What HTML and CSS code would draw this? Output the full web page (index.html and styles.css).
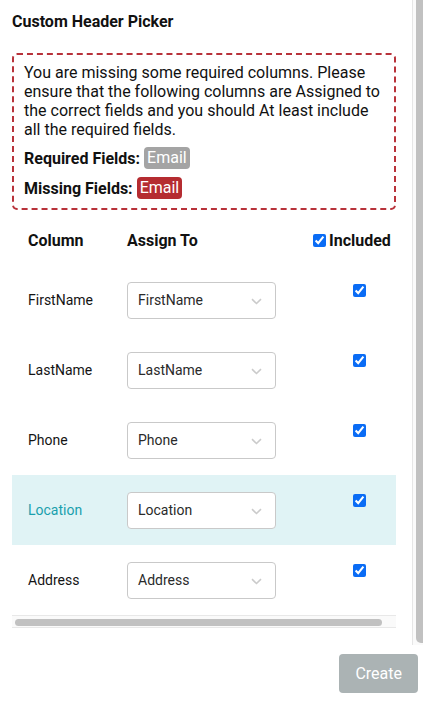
FILE: index.html
```html
<!DOCTYPE html>
<html>
<head>
<meta charset="utf-8">
<link rel="stylesheet" href="styles.css">
</head>
<body>
<div class="panel">
  <div class="body">
    <div class="content">
      <h1 class="title">Custom Header Picker</h1>
      <div class="alert">
        <p class="alert-text">You are missing some required columns. Please ensure that the following columns are Assigned to the correct fields and you should At least include all the required fields.</p>
        <div class="field-line"><strong>Required Fields:</strong><span class="badge badge-gray">Email</span></div>
        <div class="field-line"><strong>Missing Fields:</strong><span class="badge badge-red">Email</span></div>
      </div>
      <div class="table-wrap">
        <div class="table">
          <div class="row head">
            <div class="c1">Column</div>
            <div class="c2">Assign To</div>
            <div class="c3 head-inc"><input type="checkbox" class="chk" checked><span>Included</span></div>
          </div>
          <div class="row">
            <div class="c1">FirstName</div>
            <div class="c2"><div class="select"><span>FirstName</span><svg class="chev" width="11" height="7" viewBox="0 0 11 7"><path d="M1 1.2 L5.5 5.5 L10 1.2" fill="none" stroke="#cbcbcb" stroke-width="1.6"/></svg></div></div>
            <div class="c3 cell-inc"><input type="checkbox" class="chk" checked></div>
          </div>
          <div class="row">
            <div class="c1">LastName</div>
            <div class="c2"><div class="select"><span>LastName</span><svg class="chev" width="11" height="7" viewBox="0 0 11 7"><path d="M1 1.2 L5.5 5.5 L10 1.2" fill="none" stroke="#cbcbcb" stroke-width="1.6"/></svg></div></div>
            <div class="c3 cell-inc"><input type="checkbox" class="chk" checked></div>
          </div>
          <div class="row">
            <div class="c1">Phone</div>
            <div class="c2"><div class="select"><span>Phone</span><svg class="chev" width="11" height="7" viewBox="0 0 11 7"><path d="M1 1.2 L5.5 5.5 L10 1.2" fill="none" stroke="#cbcbcb" stroke-width="1.6"/></svg></div></div>
            <div class="c3 cell-inc"><input type="checkbox" class="chk" checked></div>
          </div>
          <div class="row active">
            <div class="c1">Location</div>
            <div class="c2"><div class="select"><span>Location</span><svg class="chev" width="11" height="7" viewBox="0 0 11 7"><path d="M1 1.2 L5.5 5.5 L10 1.2" fill="none" stroke="#cbcbcb" stroke-width="1.6"/></svg></div></div>
            <div class="c3 cell-inc"><input type="checkbox" class="chk" checked></div>
          </div>
          <div class="row">
            <div class="c1">Address</div>
            <div class="c2"><div class="select"><span>Address</span><svg class="chev" width="11" height="7" viewBox="0 0 11 7"><path d="M1 1.2 L5.5 5.5 L10 1.2" fill="none" stroke="#cbcbcb" stroke-width="1.6"/></svg></div></div>
            <div class="c3 cell-inc"><input type="checkbox" class="chk" checked></div>
          </div>
        </div>
        <div class="hscroll"><div class="hthumb"></div></div>
      </div>
    </div>
    <div class="vscroll"><div class="vthumb"></div></div>
  </div>
  <div class="footer"><button class="btn-create" disabled>Create</button></div>
</div>
</body>
</html>
```
FILE: styles.css
```css
html, body {
  margin: 0;
  padding: 0;
}
body {
  font-family: Roboto, "Liberation Sans", sans-serif;
  font-size: 14px;
  color: #141414;
  background: #fff;
}
.panel {
  width: 423px;
  height: 703px;
  display: flex;
  flex-direction: column;
}
.body {
  height: 645px;
  flex: none;
  display: flex;
  overflow: hidden;
}
.content {
  flex: 1;
  min-width: 0;
  padding: 12px 16px 0 12px;
  overflow: hidden;
}
.vscroll {
  width: 11px;
  flex: none;
  box-sizing: border-box;
  background: #fafafa;
  border-left: 1px solid #e6e6e6;
  padding-left: 3px;
}
.vthumb {
  height: 643px;
  background: #c1c1c1;
  border-radius: 0 0 0 5px;
}
.title {
  margin: 0;
  font-size: 16px;
  font-weight: 700;
  line-height: 20px;
  color: #111;
}
.alert {
  margin-top: 21px;
  border: 2px dashed #b8323a;
  border-radius: 5px;
  padding: 8px 14px 9px 10px;
  font-size: 16px;
  color: #111;
}
.alert-text {
  margin: 0;
  line-height: 19px;
}
.field-line {
  display: flex;
  align-items: center;
  gap: 4px;
  height: 22px;
  margin-top: 8px;
}
.field-line strong {
  font-weight: 700;
}
.badge {
  color: #fff;
  padding: 0 3px;
  border-radius: 4px;
  line-height: 22px;
  font-size: 16px;
}
.badge-gray {
  background: #a4a4a4;
}
.badge-red {
  background: #b52c31;
}
.table-wrap {
  margin-top: 5px;
  overflow: hidden;
}
.table {
  width: 400px;
}
.row {
  display: flex;
  align-items: center;
  height: 70px;
  padding-left: 16px;
  box-sizing: border-box;
}
.row.head {
  height: 50px;
  font-size: 16px;
  font-weight: 700;
  color: #111;
}
.row.active {
  background: #e0f3f5;
}
.row.active .c1 {
  color: #1a9fad;
}
.c1 {
  width: 99px;
  flex: none;
}
.c2 {
  width: 186px;
  flex: none;
}
.c3 {
  flex: 1;
}
.head-inc {
  display: flex;
  align-items: center;
  gap: 3px;
}
.cell-inc {
  align-self: flex-start;
  padding-top: 19px;
  padding-left: 40px;
  display: flex;
}
.chk {
  margin: 0;
  width: 13px;
  height: 13px;
  accent-color: #0a6cf5;
}
.select {
  width: 149px;
  height: 37px;
  box-sizing: border-box;
  border: 1px solid #c9c9c9;
  border-radius: 4px;
  background: #fff;
  display: flex;
  align-items: center;
  justify-content: space-between;
  padding: 0 13px 0 10px;
  color: #2a2a2a;
  font-size: 14px;
}
.chev {
  display: block;
  margin-top: 2px;
}
.hscroll {
  height: 13px;
  box-sizing: border-box;
  background: #fafafa;
  border-top: 1px solid #e8e8e8;
  border-bottom: 1px solid #e8e8e8;
  padding: 3px 3px 0 3px;
}
.hthumb {
  width: 367px;
  height: 7px;
  border-radius: 4px;
  background: #c1c1c1;
}
.footer {
  flex: 1;
  display: flex;
  justify-content: flex-end;
  align-items: flex-start;
  padding: 9px 5px 0 0;
}
.btn-create {
  font-family: Roboto, "Liberation Sans", sans-serif;
  font-size: 16px;
  color: #fff;
  background: #abb3b4;
  border: none;
  border-radius: 4px;
  height: 39px;
  padding: 0 16px;
}
```
